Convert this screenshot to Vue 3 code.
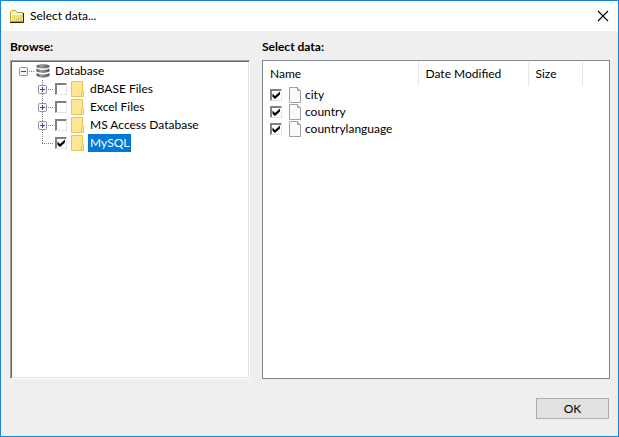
<script setup>
import { ref } from 'vue'

const databases = ref([
  { name: 'dBASE Files', checked: false, expandable: true },
  { name: 'Excel Files', checked: false, expandable: true },
  { name: 'MS Access Database', checked: false, expandable: true },
  { name: 'MySQL', checked: true, expandable: false, selected: true }
])
const tables = ref([
  { name: 'city', checked: true },
  { name: 'country', checked: true },
  { name: 'countrylanguage', checked: true }
])
</script>

<template>
  <div class="window">
    <header class="titlebar">
      <svg class="app-icon" width="16" height="16" viewBox="0 0 16 16" aria-hidden="true">
        <path d="M1.5 13.5V4L3 2.5H6.5L8 4.5H13.5V13.5Z" fill="#fff9a8" stroke="#b5a72c" />
        <path d="M3 13V6.5H14V13Z" fill="#f0dd78" />
        <path d="M2.5 13V6.5H13.5" fill="none" stroke="#fffde0" />
        <path d="M9 12H10M11 10H12M12 12H13M7 12H8M12 8H13M9 10H10" stroke="#e0b070" />
        <path d="M1 14.5H14.5V5" fill="none" stroke="#2b2600" />
      </svg>
      <h1 class="title">Select data...</h1>
      <button class="close" type="button" aria-label="Close">
        <svg width="12" height="12" viewBox="0 0 12 12"><path d="M1 1L11 11M11 1L1 11" stroke="#000" stroke-width="1.1" /></svg>
      </button>
    </header>

    <main class="body">
      <section class="browse">
        <h2 class="caption">Browse:</h2>
        <div class="tree">
          <div class="row root">
            <button class="expander" type="button" aria-label="Collapse Database">
              <svg width="9" height="9" viewBox="0 0 9 9"><rect x=".5" y=".5" width="8" height="8" rx="1" fill="#f6f6f6" stroke="#919191" /><path d="M2 4.5H7" stroke="#2c4bb0" /></svg>
            </button>
            <svg class="link" width="8" height="18" viewBox="0 0 8 18"><path d="M1 9.5H7" stroke="#808080" stroke-dasharray="1 1" /></svg>
            <svg class="db" width="14" height="14" viewBox="0 0 14 14" aria-hidden="true">
              <defs>
                <linearGradient id="disk"><stop offset="0" stop-color="#555" /><stop offset=".35" stop-color="#999" /><stop offset="1" stop-color="#555" /></linearGradient>
              </defs>
              <g fill="url(#disk)">
                <path d="M.5 2C.5 -.3 13.5 -.3 13.5 2V3.2Q7 6 .5 3.2Z" />
                <path d="M.5 4.5Q7 7.5 13.5 4.5V7.5Q7 10.3 .5 7.5Z" />
                <path d="M.5 9Q7 12 13.5 9V12Q7 15.5 .5 12Z" />
              </g>
            </svg>
            <span class="name">Database</span>
          </div>
          <label v-for="item in databases" :key="item.name" class="row child">
            <svg class="branch" width="17" height="18" viewBox="0 0 17 18" aria-hidden="true">
              <path :d="item.expandable ? 'M4.5 0V18' : 'M4.5 0V10'" stroke="#808080" stroke-dasharray="1 1" />
              <path d="M4 9.5H16" stroke="#808080" stroke-dasharray="1 1" />
              <g v-if="item.expandable">
                <rect x=".5" y="5.5" width="8" height="8" rx="1" fill="#f6f6f6" stroke="#919191" />
                <path d="M2 9.5H7M4.5 7V12" stroke="#2c4bb0" />
              </g>
            </svg>
            <input v-model="item.checked" class="check" type="checkbox" />
            <svg class="folder" width="13" height="16" viewBox="0 0 13 16" aria-hidden="true">
              <path d="M.5 .5H11.5V9.5H12.5V15.5H.5Z" fill="#ffe594" stroke="#e8c55c" />
              <path d="M10.5 15V10.5L11.5 9.5" fill="none" stroke="#e8c55c" />
            </svg>
            <span class="name" :class="{ selected: item.selected }">{{ item.name }}</span>
          </label>
        </div>
      </section>

      <section class="data">
        <h2 class="caption">Select data:</h2>
        <div class="list">
          <table>
            <colgroup><col /><col class="modified" /><col class="size" /><col class="rest" /></colgroup>
            <thead>
              <tr><th>Name</th><th>Date Modified</th><th>Size</th><td></td></tr>
            </thead>
            <tbody>
              <tr v-for="table in tables" :key="table.name">
                <td>
                  <label class="entry">
                    <input v-model="table.checked" class="check" type="checkbox" />
                    <svg class="file" width="12" height="16" viewBox="0 0 12 16" aria-hidden="true">
                      <path d="M.5 .5H8.5L11.5 3.5V15.5H.5Z" fill="#fafafa" stroke="#a0a0a0" />
                      <path d="M8.5 .5V3.5H11.5" fill="#ddd" stroke="#a0a0a0" />
                    </svg>
                    <span>{{ table.name }}</span>
                  </label>
                </td>
                <td></td><td></td><td></td>
              </tr>
            </tbody>
          </table>
        </div>
      </section>
    </main>

    <footer class="actions"><button class="ok" type="button">OK</button></footer>
  </div>
</template>

<style>
body { margin: 0; }
</style>

<style scoped>
.window {
  box-sizing: border-box;
  display: flex;
  flex-direction: column;
  min-height: 100vh;
  border: 1px solid #1883d7;
  background: #efefef;
  color: #000;
  font: 12px/18px Lato, "Open Sans", sans-serif;
}
.titlebar {
  display: flex;
  align-items: center;
  height: 30px;
  padding: 0 9px 0 8px;
  background: #fff;
}
.title { flex: 1; margin: 0 0 0 5px; font-size: 12px; font-weight: 400; }
.close { display: flex; padding: 0; border: 0; background: none; }
.body { flex: 1; display: flex; gap: 12px; padding: 7px 8px 0 9px; }
.browse, .data { display: flex; flex-direction: column; min-width: 0; }
.browse { flex: 240; }
.data { flex: 348; }
.caption { margin: 0 0 4px; font-size: 12px; line-height: 18px; font-weight: 700; }
.tree {
  flex: 1;
  box-sizing: border-box;
  padding: 1px 7px;
  border: 1px solid;
  border-color: #a0a0a0 #fff #fff #a0a0a0;
  background: #fff;
  box-shadow: inset 1px 1px #696969, inset -1px -1px #e3e3e3;
}
.row { display: flex; align-items: center; height: 18px; white-space: nowrap; }
.root { padding-left: 1px; }
.child { padding-left: 20px; }
.expander { display: flex; padding: 1px 0 0; border: 0; background: none; }
.db { margin-right: 3px; }
.folder { margin: 0 4px; }
.name { padding: 0 2px; }
.selected { background: #0078d7; color: #fff; }
.check {
  appearance: none;
  box-sizing: border-box;
  width: 12px;
  height: 12px;
  margin: 0;
  border: 1px solid;
  border-color: #808080 #e3e3e3 #e3e3e3 #808080;
  background: #fff;
  box-shadow: inset 1px 1px #808080;
}
.check:checked {
  background: #fff url("data:image/svg+xml,%3Csvg xmlns='http://www.w3.org/2000/svg' viewBox='0 0 10 10'%3E%3Cpath d='M1.500 3.500v3.200l2.500 2.300 5-4.500V1.500L4 6z'/%3E%3C/svg%3E") center / 10px 10px no-repeat;
}
.list { flex: 1; box-sizing: border-box; padding-top: 1px; border: 1px solid #828790; background: #fff; }
table { width: 100%; border-collapse: collapse; table-layout: fixed; }
.modified { width: 110px; }
.size { width: 54px; }
.rest { width: 27px; }
th { height: 24px; padding: 0 7px; border-right: 1px solid #e5e5e5; font-weight: 400; text-align: left; }
td { height: 17px; padding: 0 7px; }
.entry { display: flex; align-items: center; height: 17px; line-height: 17px; }
.file { margin: 0 4px 0 7px; }
.actions { display: flex; justify-content: flex-end; padding: 19px 9px 17px; }
.ok {
  width: 73px;
  height: 21px;
  padding: 0;
  border: 1px solid #adadad;
  background: #e1e1e1;
  color: #000;
  font: inherit;
  line-height: 19px;
}
</style>
